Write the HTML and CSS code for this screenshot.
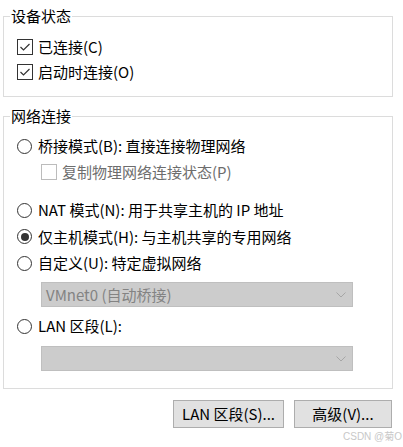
FILE: index.html
```html
<!DOCTYPE html>
<html lang="zh-CN">
<head>
<meta charset="utf-8">
<title>网络适配器</title>
<link rel="stylesheet" href="styles.css">
</head>
<body>
<div class="dialog">
  <fieldset class="group group-device">
    <legend>设备状态</legend>
    <div class="row">
      <span class="cb"><svg viewBox="0 0 14 14" width="14" height="14"><polyline points="2.5,7 5.5,10 11.5,4" /></svg></span>
      <span>已连接(C)</span>
    </div>
    <div class="row">
      <span class="cb"><svg viewBox="0 0 14 14" width="14" height="14"><polyline points="2.5,7 5.5,10 11.5,4" /></svg></span>
      <span>启动时连接(O)</span>
    </div>
  </fieldset>

  <fieldset class="group group-net">
    <legend>网络连接</legend>
    <div class="row r26"><span class="radio"></span><span>桥接模式(B): 直接连接物理网络</span></div>
    <div class="row r26 sub disabled"><span class="cb cb-off"></span><span>复制物理网络连接状态(P)</span></div>
    <div class="row rr first-rr"><span class="radio"></span><span>NAT 模式(N): 用于共享主机的 IP 地址</span></div>
    <div class="row rr"><span class="radio checked"></span><span>仅主机模式(H): 与主机共享的专用网络</span></div>
    <div class="row rr"><span class="radio"></span><span>自定义(U): 特定虚拟网络</span></div>
    <div class="select sel1"><span>VMnet0 (自动桥接)</span><svg class="chev" viewBox="0 0 10 6" width="10" height="6"><polyline points="0.5,0.5 5,5 9.5,0.5" /></svg></div>
    <div class="row r26 lan"><span class="radio"></span><span>LAN 区段(L):</span></div>
    <div class="select sel2"><span></span><svg class="chev" viewBox="0 0 10 6" width="10" height="6"><polyline points="0.5,0.5 5,5 9.5,0.5" /></svg></div>
  </fieldset>

  <div class="buttons">
    <button class="btn btn-lan">LAN 区段(S)...</button>
    <button class="btn btn-adv">高级(V)...</button>
  </div>
</div>
<div class="watermark">CSDN @菊O</div>
</body>
</html>
```

FILE: styles.css
```css
html, body {
  margin: 0;
  padding: 0;
  background: #ffffff;
  overflow: hidden;
}

body {
  font-family: "Noto Sans CJK SC", "Noto Sans", sans-serif;
  font-size: 15px;
  color: #000000;
  width: 403px;
  height: 447px;
  position: relative;
}

.dialog {
  padding: 6px 10px 0 3px;
}

.group {
  margin: 0;
  border: 1px solid #dcdcdc;
  padding: 8px 0 12px 6px;
  min-width: 0;
}

.group legend {
  padding: 0 1px;
  line-height: 20px;
  height: 20px;
}

.group-net {
  margin-top: 9px;
  padding: 7px 0 17px 6px;
}

.row {
  display: flex;
  align-items: center;
  height: 25px;
  margin-left: 7px;
  gap: 5px;
  white-space: nowrap;
  line-height: 20px;
}

.r26 {
  height: 26px;
}

.rr {
  height: 26.5px;
  gap: 6px;
}

.first-rr {
  margin-top: 12px;
}

.sub {
  margin-left: 31px;
}

.disabled {
  color: #6d6d6d;
}

.cb {
  box-sizing: border-box;
  width: 16px;
  height: 16px;
  border: 1px solid #333333;
  background: #ffffff;
  display: flex;
  align-items: center;
  justify-content: center;
  flex: none;
}

.cb svg polyline {
  fill: none;
  stroke: #333333;
  stroke-width: 1.2;
}

.cb-off {
  border-color: #bcbcbc;
}

.radio {
  box-sizing: border-box;
  width: 15px;
  height: 15px;
  border: 1px solid #333333;
  border-radius: 50%;
  background: #ffffff;
  display: flex;
  align-items: center;
  justify-content: center;
  flex: none;
}

.radio.checked::after {
  content: "";
  width: 8px;
  height: 8px;
  border-radius: 50%;
  background: #333333;
}

.row .radio + span {
  margin-left: 0;
}

.r26 .radio + span {
  margin-left: 1px;
}

.select {
  box-sizing: border-box;
  margin-left: 31px;
  width: 312px;
  height: 25px;
  background: #cccccc;
  border: 1px solid #bfbfbf;
  color: #838383;
  display: flex;
  align-items: center;
  padding: 0 6px 0 4px;
  line-height: 20px;
  white-space: nowrap;
}

.sel1 {
  margin-top: 5.5px;
}

.lan {
  margin-top: 6px;
}

.sel2 {
  margin-top: 7px;
}

.chev {
  margin-left: auto;
}

.chev polyline {
  fill: none;
  stroke: #a6a6a6;
  stroke-width: 1;
}

.buttons {
  display: flex;
  justify-content: flex-end;
  gap: 10px;
  margin-top: 11px;
  padding-right: 1px;
}

.btn {
  box-sizing: border-box;
  height: 28px;
  background: #e1e1e1;
  border: 1px solid #adadad;
  font-family: "Noto Sans CJK SC", "Noto Sans", sans-serif;
  font-size: 15px;
  color: #000000;
  padding: 0;
  line-height: 20px;
  border-radius: 0;
}

.btn-lan {
  width: 111px;
}

.btn-adv {
  width: 98px;
}

.watermark {
  position: absolute;
  left: 343px;
  top: 431px;
  font-family: "Liberation Sans", "Noto Sans CJK SC", sans-serif;
  font-size: 10px;
  color: #c8c8c8;
  white-space: nowrap;
  line-height: 12px;
}
```
